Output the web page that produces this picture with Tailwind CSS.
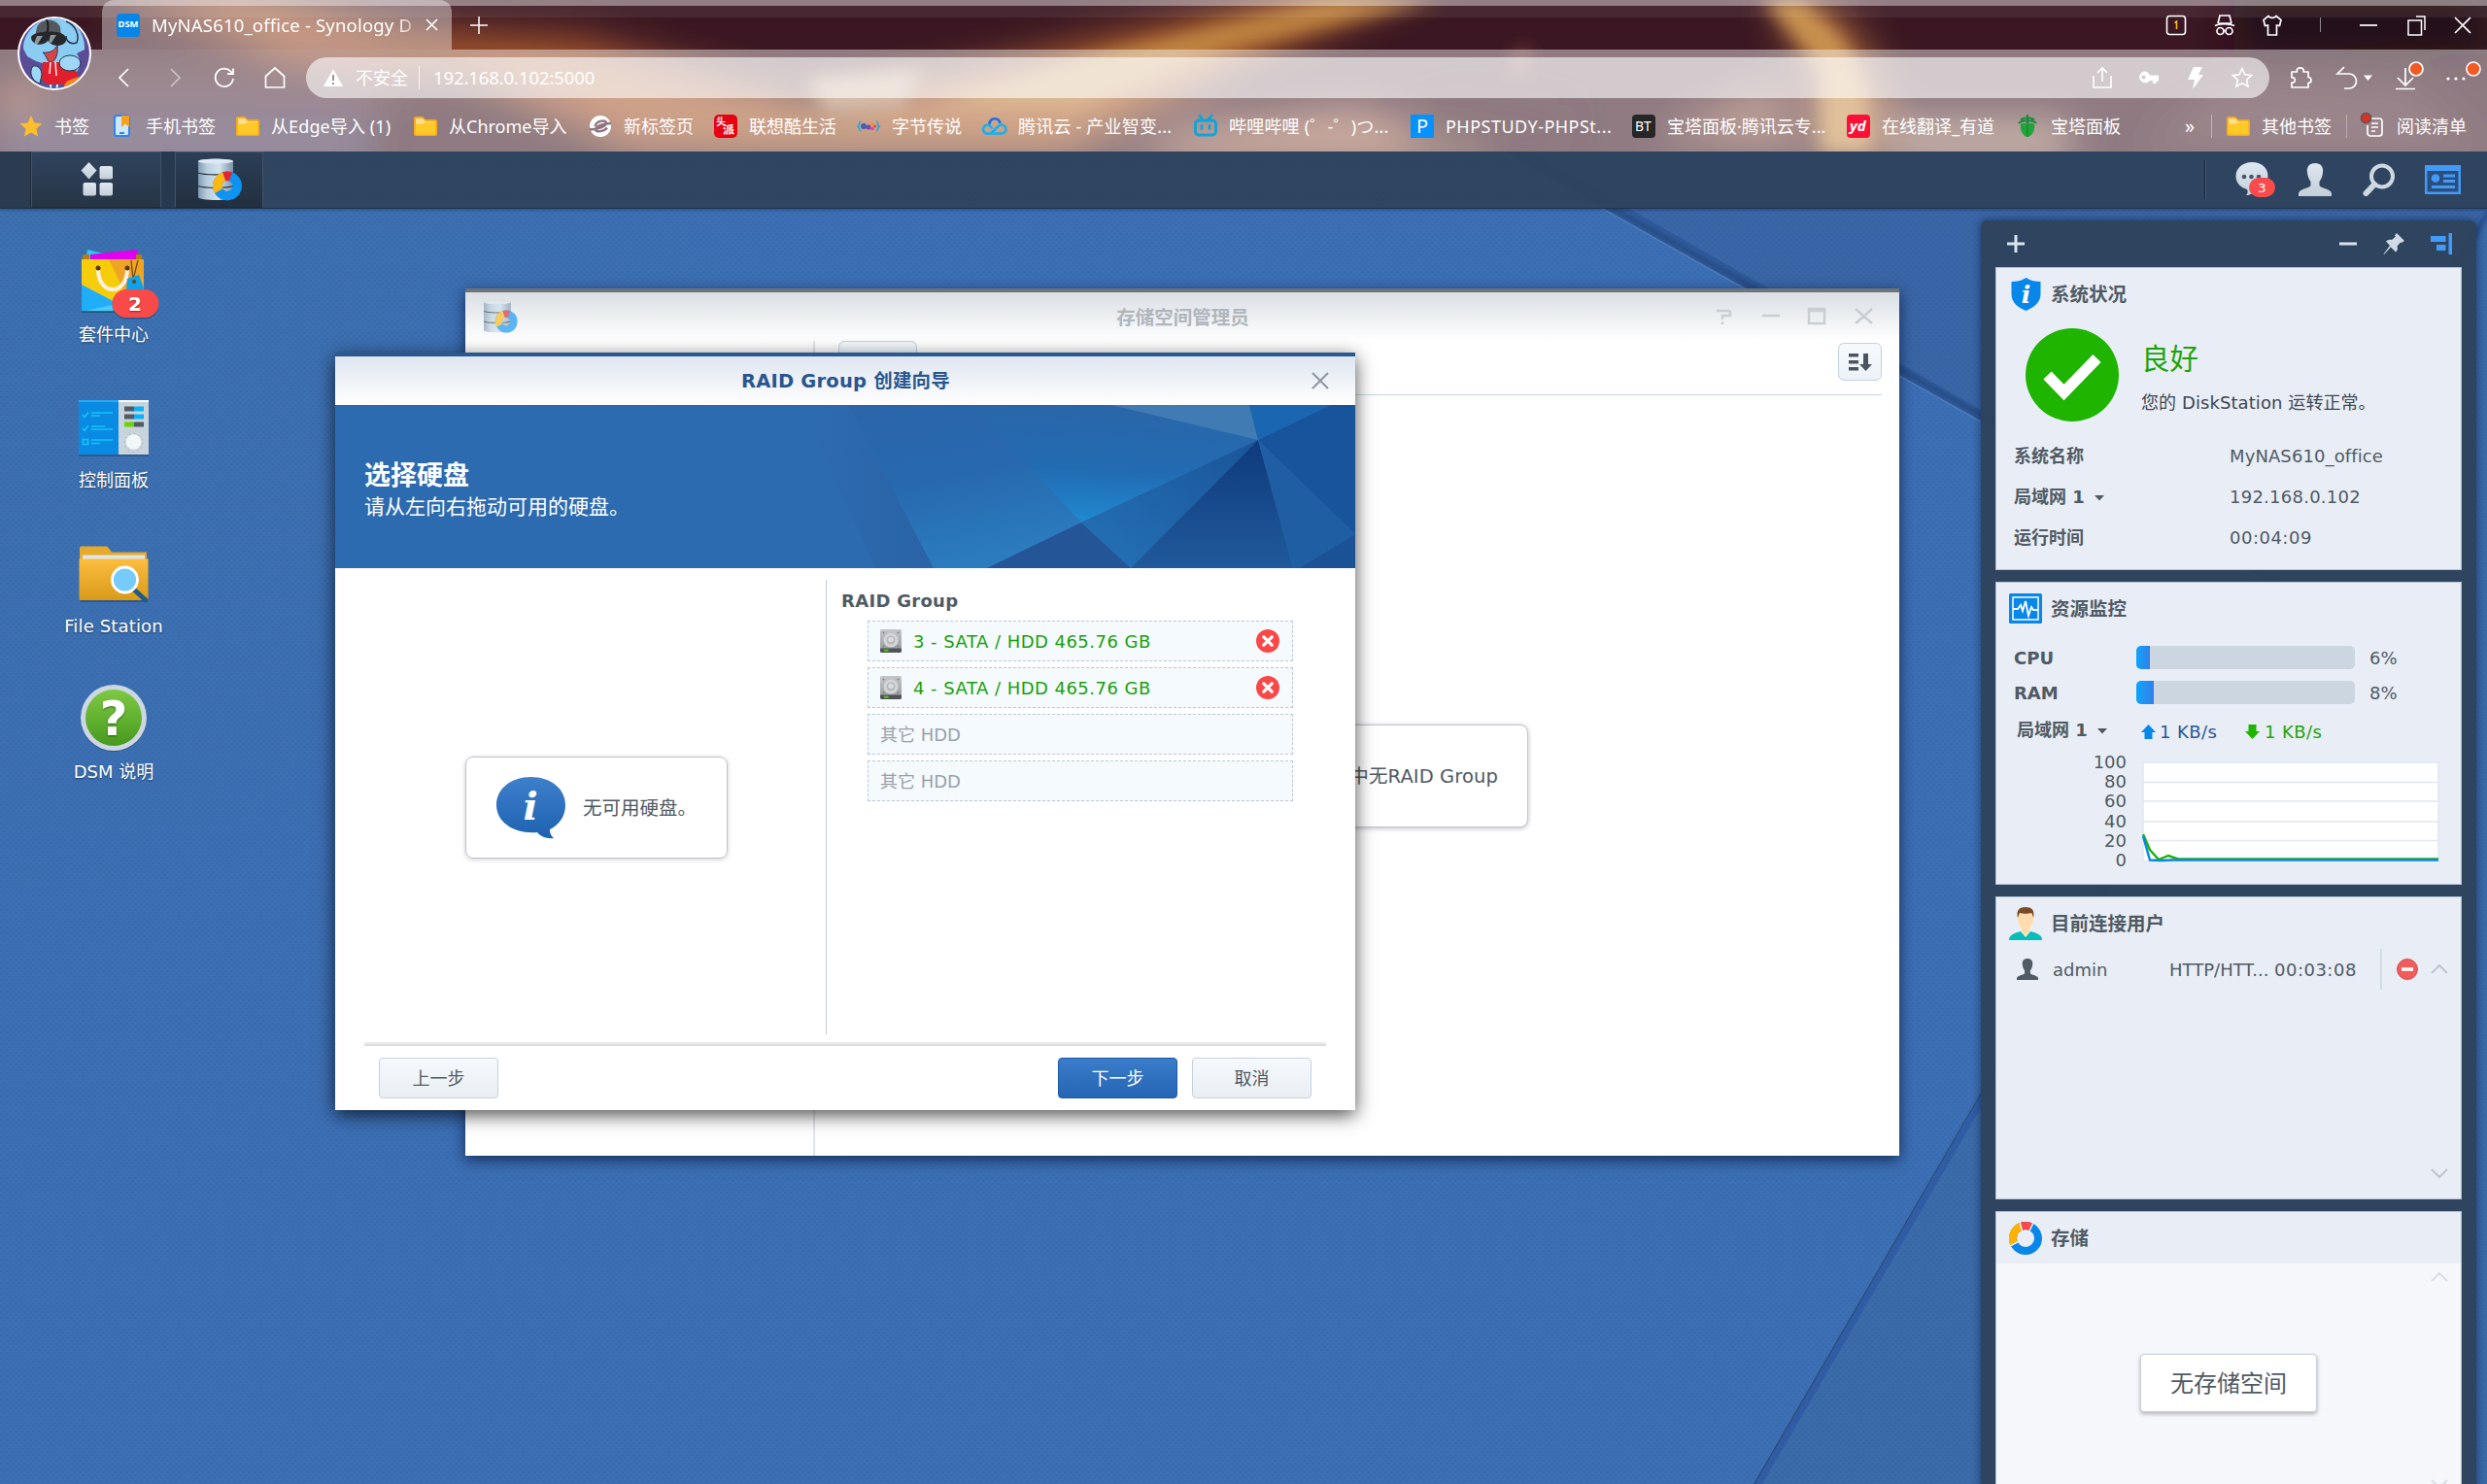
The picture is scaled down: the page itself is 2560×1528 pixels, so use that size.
<!DOCTYPE html>
<html lang="zh-CN">
<head>
<meta charset="utf-8">
<title>MyNAS610_office - Synology DiskStation</title>
<script src="https://cdn.jsdelivr.net/npm/@tailwindcss/browser@4"></script>
</head>
<body class="w-[2560px] h-[1528px] overflow-hidden flex flex-col font-['DejaVu_Sans','Noto_Sans_CJK_SC',sans-serif] text-[18px] text-[#505a64]">

<!-- shared symbols -->
<svg class="absolute" width="0" height="0">
  <defs>
    <linearGradient id="cyl" x1="0" x2="1"><stop offset="0" stop-color="#7f9ab0"/><stop offset=".25" stop-color="#b9cedd"/><stop offset=".6" stop-color="#d3e3ee"/><stop offset="1" stop-color="#7993a8"/></linearGradient>
    <linearGradient id="fold" x1="0" x2="0" y1="0" y2="1"><stop offset="0" stop-color="#fdbd3f"/><stop offset="1" stop-color="#d89a19"/></linearGradient>
    <linearGradient id="grn" x1="0" x2="0" y1="0" y2="1"><stop offset="0" stop-color="#7ec943"/><stop offset="1" stop-color="#479a1e"/></linearGradient>
    <linearGradient id="bub" x1="0" x2="0" y1="0" y2="1"><stop offset="0" stop-color="#3e80cb"/><stop offset="1" stop-color="#1d61b0"/></linearGradient>
    <linearGradient id="pale" x1="0" x2="0" y1="0" y2="1"><stop offset="0" stop-color="#dfe8f1"/><stop offset="1" stop-color="#c3ced9"/></linearGradient>
    <linearGradient id="hdd" x1="0" x2="0" y1="0" y2="1"><stop offset="0" stop-color="#c4c6c9"/><stop offset="1" stop-color="#95989c"/></linearGradient>
  </defs>
  <symbol id="storage" viewBox="0 0 46 44">
    <path d="M1 3c0-3 36-3 36 0v37c0 4-36 4-36 0z" fill="url(#cyl)"/>
    <ellipse cx="19" cy="3" rx="18" ry="2.4" fill="#dce9f2"/>
    <path d="M1 15c6 2.4 30 2.4 36 0M1 28.500c6 2.400 30 2.400 36 0" fill="none" stroke="#26323c" stroke-width="1.300"/>
    <g fill="none" stroke-width="9.500">
      <circle cx="31" cy="28.500" r="10.200" stroke="#0d93f2"/>
      <path d="M22.200 33.600A10.200 10.200 0 0 1 27.800 18.800" stroke="#fcb813"/>
      <path d="M27.800 18.800A10.200 10.200 0 0 1 34.400 18.900" stroke="#e8212e"/>
    </g>
  </symbol>
  <symbol id="folder" viewBox="0 0 24 24"><path d="M0 4a2 2 0 0 1 2-2h7l3 3h10a2 2 0 0 1 2 2v13a2 2 0 0 1-2 2H2a2 2 0 0 1-2-2z" fill="#fba61c"/><path d="M2 4h7l3 3h10v3H2z" fill="#ffe08a"/><path d="M1.500 9.500H9l3-1.500h10.500v12.500h-21z" fill="#ffc928"/></symbol>
  <symbol id="person" viewBox="0 0 34 34"><path d="M17 0c6 0 9 4 8 10-.5 4-2 7-3.500 9v4c1 3 11 3 12.500 8v3H0v-3c1.500-5 11.500-5 12.500-8v-4C11 17 9.500 14 9 10 8 4 11 0 17 0z"/></symbol>
  <symbol id="drive" viewBox="0 0 22 24"><rect width="22" height="24" rx="1.500" fill="url(#hdd)"/><circle cx="11" cy="11" r="7.500" fill="#d3d5d7"/><circle cx="11" cy="11" r="4.500" fill="#b4b7ba"/><circle cx="11" cy="10.500" r="2.800" fill="#d9dbdd"/><g fill="#7d8083"><circle cx="3.500" cy="3.500" r=".9"/><circle cx="18.500" cy="3.500" r=".9"/><circle cx="3.500" cy="17.500" r=".9"/><circle cx="18.500" cy="17.500" r=".9"/></g><path d="M0 19.500h22V22a2 2 0 0 1-2 2H2a2 2 0 0 1-2-2z" fill="#4f5459"/><rect x="4" y="20.800" width="4.500" height="1.800" fill="#5ccb1c"/></symbol>
  <symbol id="remove" viewBox="0 0 24 24"><circle cx="12" cy="12" r="12" fill="#fb4747"/><path d="M7.800 7.800l8.400 8.400m0-8.400l-8.400 8.400" stroke="#fff" stroke-width="3.300" stroke-linecap="round"/></symbol>
  <symbol id="up" viewBox="0 0 18 12"><path d="M1 10l8-8 8 8" fill="none" stroke="currentColor" stroke-width="2"/></symbol>
  <symbol id="down" viewBox="0 0 18 12"><path d="M1 2l8 8 8-8" fill="none" stroke="currentColor" stroke-width="2"/></symbol>
</svg>

<!-- browser chrome -->
<header class="relative h-[156px] shrink-0 overflow-hidden bg-[#3a1723] text-white font-['Noto_Sans','Noto_Sans_CJK_SC',sans-serif]">
  <svg class="absolute inset-0" width="2560" height="156" viewBox="0 0 2560 156">
    <defs><filter id="b1" x="-50%" y="-50%" width="200%" height="200%"><feGaussianBlur stdDeviation="20"/></filter><filter id="b2" x="-50%" y="-50%" width="200%" height="200%"><feGaussianBlur stdDeviation="9"/></filter></defs>
    <g filter="url(#b1)">
      <path d="M100 -10L250 -10L420 30L600 40L820 100L900 156L640 150L480 80L300 60z" fill="#a8582f"/>
      <path d="M0 90L60 80L0 130z" fill="#b46a40"/>
      <path d="M0 115h380v60H0z" fill="#4a3858"/>
      <path d="M60 60h300l60 50H60z" fill="#54303c"/>
      <path d="M780 120L1100 50L1360 -10L1480 -20L1290 60L1100 156H620z" fill="#b2632f"/>
      <path d="M1220 130L1400 110L1530 166H1160z" fill="#a87058"/>
      <path d="M1480 100L1620 110L1600 156H1450z" fill="#3b1824"/>
      <path d="M1820 0h60l50 60l30 96h-90l-10-90z" fill="#a06038"/>
      <path d="M1700 140L1830 80L1850 156z" fill="#8a5646"/>
      <path d="M2290 80L2480 90L2560 156H2200z" fill="#4f2a36"/>
      <path d="M1950 125h180v40H1950z" fill="#a88270"/>
      <path d="M2300 0h260v56h-260z" fill="#200b12"/>
    </g>
    <g filter="url(#b2)">
      <path d="M1120 60L1370 0H1480L1260 50L1110 110H960z" fill="#bf8643"/>
      <path d="M1815 0h40l42 40l22 50l8 66h-52V70z" fill="#c9924f"/>
      <path d="M830 80l120-8l-20 38l-80 6z" fill="#b98e6c"/>
      <path d="M1560 50h16l-4 24h-20z" fill="#7a4038"/>
    </g>
    <rect width="2560" height="6" fill="#fff" fill-opacity=".45"/>
    <rect y="6" width="2560" height="12" fill="#fff" fill-opacity=".07"/>
  </svg>

  <div class="relative h-[51px] flex items-stretch pl-[105px]">
    <div class="w-[360px] rounded-t-xl bg-white/40 flex items-center pl-[15px] pr-[13px]">
      <div class="size-6 rounded bg-[#0686e8] text-[9.500px] font-bold flex items-center justify-center">DSM</div>
      <div class="ml-[12px] w-[275px] whitespace-nowrap text-[18.500px] tracking-[0.180px] [mask-image:linear-gradient(90deg,#000_92%,transparent_102%)]">MyNAS610_office - Synology D</div>
      <svg class="ml-auto" width="15" height="15" viewBox="0 0 15 15" stroke="#fff" stroke-width="1.600"><path d="M2 2l11 11M13 2L2 13"/></svg>
    </div>
    <svg class="ml-[19px] self-center" width="18" height="18" stroke="#fff" stroke-width="1.500"><path d="M9 0v18M0 9h18"/></svg>
    <div class="ml-auto w-[332px] flex items-center justify-between pr-[15px]">
      <svg width="24" height="24" viewBox="0 0 24 24" fill="none" stroke="#fff" stroke-width="1.600"><rect x="2.500" y="2.500" width="19" height="19" rx="3"/><path d="M10.500 9.500l2-1.500v8" stroke="#f8b818"/></svg>
      <svg width="24" height="24" viewBox="0 0 24 24" fill="none" stroke="#fff" stroke-width="1.700"><path d="M5 10l2-8h10l2 8M2 12.500c5-2.500 15-2.500 20 0M5 10h14"/><circle cx="7.500" cy="18" r="3.500"/><circle cx="16.500" cy="18" r="3.500"/><path d="M11 17.500h2"/></svg>
      <svg width="24" height="24" viewBox="0 0 24 24" fill="none" stroke="#fff" stroke-width="1.700"><path d="M8 2.500c2 2.500 6 2.500 8 0l5 4-1.500 6-3-.5V22h-9V12l-3 .5L3 6.500z"/></svg>
      <span class="w-px h-[15px] bg-white/50 mx-[11px]"></span>
      <svg width="24" height="24" stroke="#fff" stroke-width="1.700"><path d="M3 12h18"/></svg>
      <svg width="24" height="24" viewBox="0 0 24 24" fill="none" stroke="#fff" stroke-width="1.500"><rect x="4" y="7" width="13.500" height="15"/><path d="M12 3h9v14"/></svg>
      <svg width="20" height="24" viewBox="0 0 20 24" stroke="#fff" stroke-width="1.600"><path d="M2 4l16 16M18 4L2 20"/></svg>
    </div>
  </div>

  <div class="relative h-[105px] bg-white/43">
    <div class="h-[60px] pt-2 flex items-start">
      <div class="w-[315px] h-[42px] flex items-center pl-[116px] gap-[27.500px] text-white">
        <svg width="24" height="24" viewBox="0 0 24 24" fill="none" stroke="#fff" stroke-width="1.700"><path d="M16 3L7 12l9 9"/></svg>
        <svg width="24" height="24" viewBox="0 0 24 24" fill="none" stroke="#fff" stroke-opacity=".5" stroke-width="1.700"><path d="M8 3l9 9-9 9"/></svg>
        <svg width="24" height="24" viewBox="0 0 24 24" fill="none" stroke="#fff" stroke-width="1.800"><path d="M21 13a9.200 9.200 0 1 1-2.500-7.500L21 8M21 2.500V8h-6"/></svg>
        <svg width="24" height="24" viewBox="0 0 24 24" fill="none" stroke="#fff" stroke-width="1.700"><path d="M2.500 10.500L12 2l9.500 8.500V22h-19z"/></svg>
      </div>
      <div class="w-[2021px] h-[42px] rounded-full bg-white/60 flex items-center pl-[18px] pr-4">
        <svg width="20" height="18" viewBox="0 0 20 18"><path d="M10 0l10 18H0z" fill="#fff"/><path d="M10 6v6M10 14v2" stroke="#a58f92" stroke-width="2"/></svg>
        <span class="ml-[13px] w-[54px]">不安全</span>
        <span class="ml-[11px] w-px h-6 bg-white/80"></span>
        <span class="ml-[14px] text-[18.500px] tracking-[-0.100px]">192.168.0.102:5000</span>
        <div class="ml-auto flex gap-6 text-white">
          <svg width="24" height="24" viewBox="0 0 24 24" fill="none" stroke="#fff" stroke-width="1.600"><path d="M3 10v12h18V10M12 16V2M7 7l5-5 5 5"/></svg>
          <svg width="24" height="24" viewBox="0 0 24 24" fill="#fff"><path fill-rule="evenodd" d="M7 5.500a6 6 0 0 1 5.800 4H22v6h-2.500V18H16v-3h-3a6 6 0 1 1-6-9.500zM6.500 9.500a2 2 0 1 0 0 4 2 2 0 0 0 0-4z"/></svg>
          <svg width="24" height="24" viewBox="0 0 24 24" fill="#fff"><path d="M10 1h9l-4 8h5L9 24l2-10H4z"/></svg>
          <svg width="24" height="24" viewBox="0 0 24 24" fill="none" stroke="#fff" stroke-width="1.600"><path d="M12 2.500l2.900 6.300 6.700.8-5 4.600 1.400 6.800-6-3.400L6 21l1.400-6.800-5-4.600 6.700-.8z"/></svg>
        </div>
      </div>
      <div class="h-[42px] flex items-center pl-5">
        <svg width="24" height="24" viewBox="0 0 24 24" fill="none" stroke="#fff" stroke-width="1.700"><path d="M3 6h5.500c-2-5.500 8.500-5.500 6.500 0h5v5.500c4 0 4 6 0 6V22H3v-5c4.500 1 4.500-6 0-5z" stroke-linejoin="round"/></svg>
        <svg class="ml-6" width="42" height="24" viewBox="0 0 42 24" fill="none" stroke="#fff" stroke-width="1.700"><path d="M9 1L2 8h12a7 7 0 0 1 0 15H9"/><path d="M29 9.500h9L33.500 15z" fill="#fff" stroke="none"/></svg>
        <svg class="ml-[18px]" width="36" height="42" viewBox="0 0 36 42" fill="none" stroke="#fff" stroke-width="1.700"><path d="M12 11v18M4 21l8 8 8-8M2 32.500h20"/><circle cx="23" cy="12" r="7" fill="#f15a24"/></svg>
        <svg class="ml-[15px]" width="44" height="42" viewBox="0 0 44 42"><g fill="#fff"><circle cx="5" cy="22" r="1.600"/><circle cx="13" cy="22" r="1.600"/><circle cx="21" cy="22" r="1.600"/></g><circle cx="31" cy="12" r="7" fill="#f15a24" stroke="#fff" stroke-width="1.600"/></svg>
      </div>
    </div>

    <!-- bookmarks -->
    <nav class="h-[38px] pl-5 flex items-center whitespace-nowrap [&_svg]:size-6 [&_svg]:shrink-0 [&_svg]:overflow-visible">
      <a class="w-[94px] flex items-center gap-3"><svg viewBox="0 0 24 24"><path d="M12 1l3.400 7.400 8 .9-6 5.300 1.700 8L12 18.500 4.900 22.600l1.700-8-6-5.300 8-.9z" fill="#ffbf2b"/></svg>书签</a>
      <a class="w-[129px] flex items-center gap-3"><svg viewBox="0 0 24 24"><rect x="4" y="1" width="15" height="21" rx="2.500" fill="#cfe6ff" stroke="#2f86ea" stroke-width="2"/><path d="M11 1h8v12l-4-3.500L11 13z" fill="#f6a21b"/><path d="M9 19h5" stroke="#2f86ea" stroke-width="2"/></svg>手机书签</a>
      <a class="w-[183px] flex items-center gap-3"><svg><use href="#folder"/></svg><span class="tracking-[0.100px]">从Edge导入 (1)</span></a>
      <a class="w-[180px] flex items-center gap-3"><svg><use href="#folder"/></svg><span>从Chrome导入</span></a>
      <a class="w-[129px] flex items-center gap-3"><svg viewBox="0 0 24 24"><circle cx="12" cy="12" r="11" fill="#fff"/><path d="M1 15c8 1 17-3 17-6.500C18 5 8 6 6.500 12M23 9c-8 0-16 3-16 6.500 0 3 9 2 12-2" fill="none" stroke="#8f7580" stroke-width="2.400"/></svg>新标签页</a>
      <a class="w-[147px] flex items-center gap-3"><svg viewBox="0 0 24 24"><rect width="24" height="24" rx="5" fill="#e60012"/><text x="2" y="11" font-size="10" fill="#fff" font-weight="700">头</text><text x="9" y="20" font-size="12" fill="#fff" font-weight="700">派</text></svg>联想酷生活</a>
      <a class="w-[130px] flex items-center gap-3"><svg viewBox="0 0 24 24"><g fill="none" stroke="#22a5e8" stroke-width="1.500"><path d="M4 7c-2 0-1 4-3 5 2 1 1 5 3 5M20 7c2 0 1 4 3 5-2 1-1 5-3 5"/></g><circle cx="7" cy="12" r="3" fill="#3862b8"/><circle cx="12" cy="13" r="2.500" fill="#7a46ae"/><circle cx="16" cy="10" r="1.700" fill="#f0932b"/><circle cx="18.500" cy="12" r="1.500" fill="#e8453c"/><circle cx="16" cy="14.500" r="1.500" fill="#e82bbd"/></svg>字节传说</a>
      <a class="w-[217px] flex items-center gap-3"><svg viewBox="0 0 24 24" fill="none" stroke-width="2.600"><path d="M6.500 10.500a5.500 5.500 0 0 1 11-1.500" stroke="#1c6fe8"/><path d="M9 14.500A4.500 4.500 0 1 0 6 19.500h13a4.500 4.500 0 0 0 0-9c-2 0-3 1-4 2L8 19.500" stroke="#14b1f0"/></svg><span class="tracking-[0.200px]">腾讯云 - 产业智变...</span></a>
      <a class="w-[223px] flex items-center gap-3"><svg viewBox="0 0 24 24" fill="none" stroke="#0ba5de" stroke-width="2.800"><rect x="1.500" y="6" width="21" height="15" rx="3.500"/><path d="M6 1l3 4M18 1l-3 4M8 11.500v3M16 11.500v3" stroke-linecap="round"/></svg><span class="tracking-[0.200px]">哔哩哔哩 (゜-゜)つ...</span></a>
      <a class="w-[228px] flex items-center gap-3"><svg viewBox="0 0 24 24"><rect width="24" height="24" fill="#0492ff"/><text x="6" y="19" font-size="20" fill="#fff">P</text></svg><span class="tracking-[0.480px]">PHPSTUDY-PHPSt...</span></a>
      <a class="w-[221px] flex items-center gap-3"><svg viewBox="0 0 24 24"><rect width="24" height="24" rx="4" fill="#262626"/><text x="3" y="17" font-size="14" fill="#fff">BT</text></svg><span>宝塔面板·腾讯云专...</span></a>
      <a class="w-[174px] flex items-center gap-3"><svg viewBox="0 0 24 24"><rect width="24" height="24" rx="4" fill="#fc1038"/><text x="3" y="17" font-size="15" font-style="italic" font-weight="700" fill="#fff">yd</text></svg>在线翻译_有道</a>
      <a class="w-[174px] flex items-center gap-3"><svg viewBox="0 0 24 24"><path d="M5 10c2-2 12-2 14 0 1 6-2 12-7 13C7 22 4 16 5 10z" fill="#20a53a"/><path d="M3 9c4-4 14-4 18 0M5 5.500c3-3 11-3 14 0M12 0v9" fill="none" stroke="#178a3a" stroke-width="2"/><path d="M12 10v13" stroke="#0f7a2c"/></svg>宝塔面板</a>
      <span class="w-[27px] text-[20px] leading-none">»</span>
      <span class="w-px h-6 bg-white/40"></span>
      <a class="ml-[15px] w-[123px] flex items-center gap-3"><svg><use href="#folder"/></svg>其他书签</a>
      <span class="w-px h-6 bg-white/30"></span>
      <a class="ml-[15px] flex items-center gap-3"><svg viewBox="0 0 24 24" fill="none" stroke="#fff" stroke-width="1.700"><path d="M9 4h9a3 3 0 0 1 3 3v12a3 3 0 0 1-3 3H9a3 3 0 0 1-3-3v-8M10 9h7M10 13h7M10 17h4"/><circle cx="4.500" cy="3.500" r="5" fill="#da3324" stroke="#6c5254"/></svg><span>阅读清单</span></a>
    </nav>
  </div>

  <!-- profile avatar -->
  <svg class="absolute left-[16px] top-[16px]" width="80" height="80" viewBox="0 0 80 80">
    <defs><clipPath id="av"><circle cx="40" cy="39" r="36"/></clipPath></defs>
    <circle cx="40" cy="39" r="38" fill="#fff"/>
    <g clip-path="url(#av)">
      <rect width="80" height="80" fill="#5a4c96"/>
      <path d="M8 34C8 14 28 0 46 3c18 2 26 18 25 32l-8 4c4 6 4 14 0 19l-14 4-12-10-16-5-9-5z" fill="#8bcdf2"/>
      <path d="M52 6c10 4 14 14 11 22-6 2-11-1-11-7" fill="none" stroke="#243249" stroke-width="1.500"/>
      <path d="M22 12c4-9 20-10 24 0l1 10H20z" fill="#55595d"/>
      <path d="M32 4c2 5 2 10 0 16" fill="none" stroke="#1a1c1f" stroke-width="2"/>
      <path d="M16 22c2-6 28-8 34-2 5 5 1 11-7 11-5 0-8-3-10-5-4 6-17 5-17-4z" fill="#26282b"/>
      <path d="M22 21h6l-5 8h-4zM36 20h6l-5 8h-3z" fill="#8e959b"/>
      <path d="M28 38c7 1 13-2 15-8 1 9-1 18-8 18-3-2-3-7-7-10z" fill="#d84347" stroke="#2b3850" stroke-width="1"/>
      <path d="M28 48h26c8 6 11 12 9 18l-10 5H32l-5-6z" fill="#e11f2c"/>
      <path d="M41 48l1 14M36 48l-1 12" stroke="#fff" stroke-width="1.400"/>
      <path d="M18 52c5-1 9 3 9 9l-2 9c-8-2-12-12-7-18z" fill="#9fd8f6" stroke="#243249"/>
      <ellipse cx="56" cy="49" rx="11" ry="8" fill="#9fd8f6" stroke="#243249"/>
      <path d="M50 75c0-12 14-8 24-17-2 14-9 23-24 20z" fill="#f08a1d"/><path d="M56 72c6-3 10-6 13-9-1 8-6 11-12 12z" fill="#ffd23c"/>
      <path d="M30 71h18l2 9H28z" fill="#3563a8"/><path d="M36 71l1 9M43 71l-1 9" stroke="#e6f2fb" stroke-width="2"/>
    </g>
  </svg>
</header>

<!-- desktop -->
<main class="relative flex-1 flex flex-col overflow-hidden bg-[#3b6cb0]">
  <svg class="absolute inset-0" width="2560" height="1372" viewBox="0 156 2560 1372">
    <defs>
      <pattern id="tex" width="6" height="6" patternUnits="userSpaceOnUse"><path d="M0 1h3M3 4h3" stroke="#1d4c90" stroke-opacity=".16" stroke-width="1.500"/></pattern>
      <radialGradient id="tl" cx="0" cy="0" r="1"><stop offset="0" stop-color="#3c73a8"/><stop offset="1" stop-color="#3c73a8" stop-opacity="0"/></radialGradient>
      <filter id="sf"><feGaussianBlur stdDeviation="2"/></filter>
    </defs>
    <rect y="156" width="2560" height="1372" fill="#3c6fb4"/>
    <rect y="156" width="900" height="900" fill="url(#tl)" opacity=".5"/>
    <path d="M1560 156L2345 597L2590 156z" fill="#3a66a6"/>
    <path d="M2343 600L1804 1528H2560V220z" fill="#3b6ba8"/>
    <path d="M1545 156L2330 598L2345 598L1575 156z" fill="#305b9c"/>
    <path d="M1556 156L2341 597" stroke="#27487c" stroke-width="4" filter="url(#sf)"/>
    <path d="M1545 156L2330 598" stroke="#4f7fbd" stroke-width="1.500"/>
    <path d="M2343 600L1804 1528h10L2353 600z" fill="#315da4"/>
    <path d="M2342 602L1805 1528" stroke="#2b4d80" stroke-width="2.500"/>
    <path d="M2343 600L1804 1528" stroke="#4577b5" stroke-width="1.200"/>
    <path d="M2350 590L2562 216" stroke="#2a4f88" stroke-width="6" filter="url(#sf)"/>
    <rect y="156" width="2560" height="1372" fill="url(#tex)"/>
  </svg>

  <!-- taskbar -->
  <div class="relative h-[59px] shrink-0 flex items-stretch bg-[#2e425c]/95 border-b border-[#20344f] shadow-[0_1px_3px_rgba(0,0,0,.3)]">
    <div class="w-[32px] bg-[#2b3b50] border-r border-[#1d2a3b]"></div>
    <div class="w-[134px] bg-linear-to-b from-[#30445e] to-[#263445] border border-[#405269] border-b-[#1d2a3b] flex items-center justify-center">
      <svg width="36" height="36" viewBox="0 0 36 36" fill="url(#pale)"><path d="M10.500 0l8 8.500-8 9-8-9z"/><rect x="21.500" y="4" width="13.500" height="13.500" rx="2"/><rect x="4.500" y="21" width="13.500" height="13.500" rx="2"/><rect x="21.500" y="21" width="13.500" height="13.500" rx="2"/></svg>
    </div>
    <div class="w-[14px] bg-[#27394f]"></div>
    <div class="w-[91px] bg-linear-to-b from-[#2c3f57] to-[#222f3f] border border-[#41536a] border-b-[#1d2a3b] flex items-center justify-center">
      <svg width="46" height="44"><use href="#storage"/></svg>
    </div>
    <div class="ml-auto w-[291px] flex items-center pl-8">
      <div class="-ml-8 mr-[31px] w-px h-10 bg-[#17273b] shadow-[1px_0_0_#465a73]"></div>
      <svg width="42" height="38" viewBox="0 0 42 38"><path d="M17 1c10 0 16.500 6 16.500 14S27 29 19 30c0 3-4 5-8 5 2-2 2-4 1-6C5 27 .5 22 .5 15.500.5 7.500 7 1 17 1z" fill="url(#pale)"/><g fill="#46566b"><circle cx="9" cy="16" r="2.300"/><circle cx="16.500" cy="16" r="2.300"/><circle cx="24" cy="16" r="2.300"/></g><rect x="14" y="17" width="27" height="20" rx="10" fill="#f94b4b"/><text x="27.500" y="32" text-anchor="middle" font-size="13" fill="#fff">3</text></svg>
      <svg class="ml-[23px]" width="34" height="34" fill="url(#pale)"><use href="#person"/></svg>
      <svg class="ml-[32px]" width="34" height="34" viewBox="0 0 34 34" fill="none" stroke="#ced8e2"><circle cx="20" cy="13.500" r="11" stroke-width="4"/><path d="M12 22L3.500 31" stroke-width="6" stroke-linecap="round"/></svg>
      <svg class="ml-[30px]" width="37" height="30" viewBox="0 0 37 30"><rect x="1.250" y="1.250" width="34.500" height="27.500" fill="#2b4e7c" stroke="#429bf8" stroke-width="2.500"/><path d="M0 0h37v6H0z" fill="#429bf8"/><circle cx="11" cy="13.500" r="4.300" fill="#429bf8"/><path d="M19 11h12M19 16.500h12M7 22.500h24" stroke="#429bf8" stroke-width="3"/></svg>
    </div>
  </div>

  <!-- desktop icons -->
  <div class="relative mt-[39px] ml-[42px] w-[150px] flex flex-col text-white text-center [text-shadow:0_1px_2px_rgba(0,0,0,.45)]">
    <div class="h-[150px] flex flex-col items-center">
      <svg width="84" height="76" viewBox="75 254 84 76" class="overflow-visible">
        <path d="M90 257l24 6-6 8H88z" fill="#2ccaf0"/><path d="M93 262l49-5v12H93z" fill="#e100ef"/><path d="M86 262h6v6h-8zM140 262h6v6h-6z" fill="#b87c14"/>
        <path d="M84 267h64v54H84z" fill="#f6cd0b"/><path d="M112 267h36v54h-10z" fill="#eea523"/>
        <path d="M84 293l46 24v4H84z" fill="#20aefb"/><path d="M84 321l40-9 10 9z" fill="#46cbfb"/><path d="M84 320h64v2H84z" fill="#204468" opacity=".7"/>
        <path d="M101 277c0 28 30 28 30 0" fill="none" stroke="#fdf1e6" stroke-width="4"/><circle cx="101" cy="276" r="2.500" fill="#5b3908"/><circle cx="131" cy="276" r="2.500" fill="#5b3908"/>
        <path d="M135 268l2 20 5-20" fill="none" stroke="#6b4310" stroke-width="1.200"/><path d="M131 287l12-4 5 14-8 12-10-8z" fill="#0ea3e8"/><circle cx="138" cy="290" r="2" fill="#6b4310"/>
        <rect x="115.500" y="299.500" width="48" height="29" rx="14.500" fill="#1c3f6e" opacity=".5"/><rect x="115.500" y="298" width="48" height="29" rx="14.500" fill="#f94a4a"/><text x="139" y="320" text-anchor="middle" font-size="20" font-weight="700" fill="#fff">2</text>
      </svg>
      <div class="mt-[1px]">套件中心</div>
    </div>
    <div class="h-[150px] flex flex-col items-center pt-[8px]">
      <svg width="72" height="58" viewBox="81 412 72 58">
        <path d="M81 414h72v56H81z" fill="#1e3b63" opacity=".4"/><path d="M81 412h41v56H81z" fill="#0a8be3"/><path d="M81 412h41v2H81z" fill="#28aaf5"/><path d="M122 412h31v56h-31z" fill="#c9d3dc"/><path d="M122 412h31v2h-31z" fill="#fff"/>
        <path d="M94 425h22M94 428h9M94 439h14M94 442h22M94 453h22M94 456.500h9M85 427l2 2.500 4-5M85 441l2 2.500 4-5M85.500 452.500h5v5h-5z" stroke="#17c2f7" stroke-width="1.700" fill="none"/>
        <g stroke-width="5"><path d="M128 421h10" stroke="#505b66"/><path d="M138 421h10" stroke="#0ab2f7"/><path d="M128 429h10" stroke="#505b66"/><path d="M138 429h10" stroke="#0ab2f7"/><path d="M128 437h10" stroke="#6bd403"/><path d="M138 437h10" stroke="#505b66"/></g>
        <circle cx="137.500" cy="456" r="9.500" fill="none" stroke="#8d989f" stroke-dasharray="1 4"/><circle cx="137.500" cy="455" r="7.800" fill="#f2f7fa"/>
      </svg>
      <div class="mt-[11px]">控制面板</div>
    </div>
    <div class="h-[150px] flex flex-col items-center pt-[8px]">
      <svg width="72" height="60" viewBox="0 0 72 60">
        <path d="M1 2q0-1.500 1.500-1.500H28q2 0 3 2l3 4h36v20H1z" fill="#e5a92b"/><path d="M4 9.500h64v8H4z" fill="#dfe4e6"/><path d="M1 15h70v41q0 2-2 2H3q-2 0-2-2z" fill="#28415f" opacity=".5"/><path d="M.5 13.500h71V55q0 1-1 1h-69q-1 0-1-1z" fill="url(#fold)"/>
        <path d="M58 46l11 10" stroke="#1e5c86" stroke-width="5" stroke-linecap="round"/><circle cx="47.500" cy="35" r="13" fill="#76cbf9" stroke="#fff" stroke-width="2.800"/>
      </svg>
      <div class="mt-[9px] tracking-[0.150px]">File Station</div>
    </div>
    <div class="h-[150px] flex flex-col items-center">
      <svg width="70" height="70" viewBox="0 0 70 70"><circle cx="35" cy="36" r="34" fill="#1e3b63" opacity=".5"/><circle cx="35" cy="35" r="34" fill="#cdd7e2"/><circle cx="35" cy="35" r="29" fill="url(#grn)"/><text x="35" y="53" text-anchor="middle" font-size="50" font-weight="700" fill="#fff">?</text></svg>
      <div class="mt-[7px]">DSM 说明</div>
    </div>
  </div>

  <!-- storage manager window -->
  <section class="absolute left-[479px] top-[141px] w-[1476px] h-[893px] bg-white border-t-4 border-[#6f747a] shadow-[0_4px_14px_rgba(0,10,40,.65)] flex flex-col">
    <div class="h-[50px] shrink-0 bg-linear-to-b from-[#dadfe4] to-white flex items-center pl-[18px] pr-[26px]">
      <svg class="opacity-65" width="36" height="34" viewBox="0 0 46 44"><use href="#storage"/></svg>
      <div class="flex-1 pl-[137px] pt-[3px] text-center font-bold text-[19.500px] text-[#b0b6bd]">存储空间管理员</div>
      <svg width="164" height="20" viewBox="0 0 164 20" fill="none" stroke="#c9ced3" stroke-width="2.500"><path d="M2 4h12q2 0 2 2v3H8v4M8 15.500v2.500M49 9h18M97 2h16v15H97zM97 4h16M145 2l17 15M162 2l-17 15"/></svg>
    </div>
    <div class="flex-1 flex">
      <div class="w-[360px] border-r-2 border-[#e2e5e8]"></div>
      <div class="flex-1 flex flex-col pl-6 pr-[18px]">
        <div class="h-[56px] flex items-start justify-between border-b border-[#c9d6e4]">
          <div class="w-[81px] h-10 border border-[#c4d0df] rounded-md bg-[#f3f8fd]"></div>
          <div class="mt-[2px] w-[45px] h-[39px] border border-[#c4d2e1] rounded-md bg-linear-to-b from-[#f6fafe] to-[#ecf2f7] flex items-center justify-center">
            <svg width="26" height="20" viewBox="0 0 26 20" fill="#4a5560"><path d="M1 1h10v3.500H1zM1 8h10v3.500H1zM1 15h10v3.500H1zM16 1h5v11h4l-6.500 7L12 12h4z"/></svg>
          </div>
        </div>
        <div class="mt-[339px] ml-[359px] w-[351px] h-[106px] rounded-lg border border-[#bcc5d1] bg-white shadow-[0_1px_5px_rgba(0,0,0,.25)] flex items-center justify-end pr-[30px] pt-[2px] text-[19.500px] tracking-[0.100px] whitespace-nowrap">系统中无RAID Group</div>
      </div>
    </div>
  </section>

  <!-- RAID group wizard -->
  <section class="absolute left-[345px] top-[207px] w-[1050px] h-[780px] bg-white border-t-4 border-[#2b5890] shadow-[0_5px_18px_rgba(0,0,0,.7)] flex flex-col">
    <div class="h-[50px] shrink-0 bg-linear-to-b from-[#dee6f0] to-white flex items-center pr-[27px]">
      <div class="flex-1 pl-[46px] pt-[2px] text-center font-bold text-[19.500px] tracking-[0.200px] text-[#29568f]">RAID Group 创建向导</div>
      <svg width="18" height="18" viewBox="0 0 18 18" stroke="#8e969e" stroke-width="2"><path d="M1 1l16 16M17 1L1 17"/></svg>
    </div>
    <div class="relative h-[168px] shrink-0 bg-[#2d6bb1] text-white">
      <svg class="absolute inset-0" width="1050" height="168">
        <defs>
          <linearGradient id="ga" x1="0" y1="0" x2=".3" y2="1"><stop offset="0" stop-color="#2b65aa"/><stop offset=".5" stop-color="#2768ae"/><stop offset="1" stop-color="#2b7bbe"/></linearGradient>
          <linearGradient id="gb" x1=".5" y1="0" x2=".4" y2="1"><stop offset="0" stop-color="#2a66a9"/><stop offset=".55" stop-color="#226bb2"/><stop offset="1" stop-color="#2089d0"/></linearGradient>
          <linearGradient id="ge" x1="0" y1="0" x2="0" y2="1"><stop offset="0" stop-color="#0e3a7c"/><stop offset="1" stop-color="#205a9b"/></linearGradient>
          <linearGradient id="gd" x1="1" y1="0" x2="0" y2="1"><stop offset="0" stop-color="#1a5498"/><stop offset="1" stop-color="#2472b8"/></linearGradient>
          <linearGradient id="gs" x1="0" y1="0" x2="1" y2="0"><stop offset="0" stop-color="#2d6bb1"/><stop offset="1" stop-color="#2a63a6"/></linearGradient>
        </defs>
        <path d="M480 0h49l87 168h-60z" fill="url(#gs)"/>
        <path d="M529 0h127l112 121-97 47h-55z" fill="url(#ga)"/>
        <path d="M656 0h143l151 36-182 85z" fill="url(#gb)"/>
        <path d="M799 0h142l9 36z" fill="#417bb4"/>
        <path d="M941 0h84l-75 36z" fill="#1b66b0"/>
        <path d="M768 121l-97 47h148z" fill="#245597"/>
        <path d="M950 36L768 121l51 47z" fill="url(#gd)"/>
        <path d="M950 36L819 168h167z" fill="url(#ge)"/>
        <path d="M950 36l36 132h6l58-35z" fill="#205ea3"/>
        <path d="M950 36l75-36h25v133z" fill="#18549b"/>
        <path d="M992 168l58-35v35z" fill="#1b5296"/>
      </svg>
      <div class="relative pl-[30px] pt-[54px]">
        <h2 class="text-[27px] leading-[38px] font-bold">选择硬盘</h2>
        <p class="text-[21px] leading-[26px]">请从左向右拖动可用的硬盘。</p>
      </div>
    </div>
    <div class="h-[492px] flex pt-[12px]">
      <div class="w-[506px] h-[468px] border-r border-[#c3cbd9] pl-[134px] pt-[182px]">
        <div class="w-[270px] h-[105px] rounded-lg border border-[#bcc5d1] shadow-[0_1px_5px_rgba(0,0,0,.2)] flex items-center pl-[30px] text-[19.500px]">
          <svg width="73" height="66" viewBox="0 0 73 66"><path d="M36.500 1C57 1 72 13 72 30c0 11-6 20-16 25 0 5 2 7 4 9-7 1-14-2-17-6C20 60 1 48 1 30 1 13 16 1 36.500 1z" fill="url(#bub)"/><text x="36" y="45" text-anchor="middle" font-family="DejaVu Serif" font-size="40" font-style="italic" font-weight="700" fill="#fff">i</text></svg>
          <span class="ml-[17px] pt-[2px]">无可用硬盘。</span>
        </div>
      </div>
      <div class="pl-[15px] pt-[11px]">
        <h3 class="font-bold leading-[22px] tracking-[0.300px]">RAID Group</h3>
        <div class="mt-[9px] ml-[27px] w-[438px] flex flex-col gap-[6px]">
          <div class="h-[42px] border border-dashed border-[#b9c8d8] bg-[#f5faff] flex items-center pl-3 pr-[13px] text-[#1ba00a]"><svg width="22" height="24"><use href="#drive"/></svg><span class="ml-[12px] tracking-[0.470px]">3 - SATA / HDD 465.76 GB</span><svg class="ml-auto" width="24" height="24"><use href="#remove"/></svg></div>
          <div class="h-[42px] border border-dashed border-[#b9c8d8] bg-[#f5faff] flex items-center pl-3 pr-[13px] text-[#1ba00a]"><svg width="22" height="24"><use href="#drive"/></svg><span class="ml-[12px] tracking-[0.470px]">4 - SATA / HDD 465.76 GB</span><svg class="ml-auto" width="24" height="24"><use href="#remove"/></svg></div>
          <div class="h-[42px] border border-dashed border-[#b9c8d8] bg-[#f5faff] flex items-center px-3 text-[#98a1ab]">其它 HDD</div>
          <div class="h-[42px] border border-dashed border-[#b9c8d8] bg-[#f5faff] flex items-center px-3 text-[#98a1ab]">其它 HDD</div>
        </div>
      </div>
    </div>
    <div class="-mt-[4px] mx-[30px] h-[4px] shrink-0 bg-linear-to-b from-[#f2f3f4] to-[#d5d7d9]"></div>
    <div class="mt-[12px] h-[42px] flex pl-[45px] pr-[45px] gap-[15px]">
      <button class="w-[123px] rounded-[4px] border border-[#c5d1df] bg-linear-to-b from-[#f6fafe] to-[#e9eef3] pt-px">上一步</button>
      <button class="ml-auto w-[123px] rounded-[4px] border border-[#1e5aa5] bg-linear-to-b from-[#3b7dcb] to-[#2565b3] text-white pt-px">下一步</button>
      <button class="w-[123px] rounded-[4px] border border-[#c5d1df] bg-linear-to-b from-[#f6fafe] to-[#e9eef3] pt-px">取消</button>
    </div>
  </section>

  <!-- widget panel -->
  <aside class="absolute left-[2039px] top-[71px] w-[510px] h-[1320px] rounded-t-md bg-[#2e425b]/95 shadow-[0_0_10px_rgba(0,10,40,.5)] px-[15px] flex flex-col gap-3">
    <div class="h-[36px] shrink-0 flex items-center pt-3 pl-[12px] pr-[10px]">
      <svg width="18" height="18" stroke="#dbe4ed" stroke-width="3"><path d="M9 0v18M0 9h18"/></svg>
      <svg class="ml-auto" width="18" height="18" stroke="#dbe4ed" stroke-width="3"><path d="M0 9h18"/></svg>
      <svg class="ml-[27px]" width="23" height="23" viewBox="0 0 23 23" fill="#cfdae5"><path d="M14 0l8 8-3 2-1-.5-3.500 4c1 3 0 5-1.500 6L8 14.500 1 22l-.5-.5L7 13 3 8.500c1.500-1.500 4-2 6-1.500L13 3.500l-1-1z"/></svg>
      <svg class="ml-[26px]" width="22" height="22" fill="#429bf8"><path d="M0 3h15.500v6H0zM6 12h9.500v6H6zM18.500 0H22v22h-3.500z"/></svg>
    </div>

    <div class="h-[312px] shrink-0 bg-[#e9eef6] border border-[#b7c3d2]">
      <div class="h-[53px] flex items-center pl-[15px]">
        <svg width="31" height="34" viewBox="0 0 31 34"><path d="M15.500 0c5 3 10 4 15 4v13c0 9-8 14-15 17C8 31 .5 26 .5 17V4c5 0 10-1 15-4z" fill="#0887ea"/><text x="15.500" y="26" text-anchor="middle" font-family="DejaVu Serif" font-size="25" font-style="italic" font-weight="700" fill="#fff">i</text></svg>
        <span class="ml-[10px] pt-[2px] font-bold text-[19.500px]">系统状况</span>
      </div>
      <div class="h-[119px] flex pl-[30px] pt-[9px]">
        <svg width="96" height="96" viewBox="0 0 96 96"><circle cx="48" cy="48" r="48" fill="#1fb400"/><path d="M22.500 48.500L39.500 66l34-35" fill="none" stroke="#fff" stroke-width="11.500"/></svg>
        <div class="ml-[23px]"><div class="mt-[10px] text-[29.500px] leading-[44px] text-[#1ea30a]">良好</div><div class="mt-[10px] leading-[26px] text-[#3d4650] tracking-[0.080px]">您的 DiskStation 运转正常。</div></div>
      </div>
      <dl class="grid grid-cols-[222px_1fr] auto-rows-[42px] items-center pl-[18px]">
        <dt class="font-bold">系统名称</dt><dd class="tracking-[0.100px]">MyNAS610_office</dd>
        <dt class="font-bold flex items-center">局域网 1<svg class="ml-[10px] mt-1" width="10" height="6"><path d="M0 0h10L5 5.500z" fill="#505a64"/></svg></dt><dd class="tracking-[0.250px]">192.168.0.102</dd>
        <dt class="font-bold">运行时间</dt><dd class="tracking-[0.500px]">00:04:09</dd>
      </dl>
    </div>

    <div class="h-[312px] shrink-0 bg-[#e9eef6] border border-[#b7c3d2]">
      <div class="h-[59px] flex items-center pl-[13px] pb-[6px]">
        <svg width="34" height="31" viewBox="0 0 34 31"><rect width="34" height="31" rx="1.500" fill="#0887ea"/><rect x="4" y="4" width="26" height="23" fill="none" stroke="#fff" stroke-width="1.500"/><path d="M4 16h5l3-4 2 6 3-10 3 15 3-9 2 3h5" fill="none" stroke="#fff" stroke-width="1.800"/></svg>
        <span class="ml-[9px] pt-[2px] font-bold text-[19.500px]">资源监控</span>
      </div>
      <div class="h-[36px] flex items-center pl-[18px]"><b class="w-[126px]">CPU</b><div class="w-[225px] h-6 rounded-[5px] bg-[#ccd6e1] overflow-hidden"><div class="h-full bg-linear-to-r from-[#03a5fd] to-[#2f7fe8]" style="width:6.2%"></div></div><span class="ml-[15px]">6%</span></div>
      <div class="h-[36px] flex items-center pl-[18px]"><b class="w-[126px]">RAM</b><div class="w-[225px] h-6 rounded-[5px] bg-[#ccd6e1] overflow-hidden"><div class="h-full bg-linear-to-r from-[#03a5fd] to-[#2f7fe8]" style="width:8%"></div></div><span class="ml-[15px]">8%</span></div>
      <div class="h-[44px] flex items-center pl-[21px]">
        <b class="w-[128px] flex items-center -mt-1">局域网 1<svg class="ml-[10px] mt-1" width="10" height="6"><path d="M0 0h10L5 5.500z" fill="#505a64"/></svg></b>
        <svg width="15" height="15"><path d="M7.500 0L15 8h-3.500v7h-8V8H0z" fill="#0887ea"/></svg><span class="ml-[4px] w-[88px] tracking-[0.400px] text-[#2b5795]">1 KB/s</span>
        <svg width="15" height="15"><path d="M7.500 15L0 7h3.500V0h8v7H15z" fill="#1fb400"/></svg><span class="ml-[5px] tracking-[0.400px] text-[#1ea30a]">1 KB/s</span>
      </div>
      <div class="flex">
        <div class="w-[134px] text-right leading-[20.200px]"><div>100</div><div>80</div><div>60</div><div>40</div><div>20</div><div>0</div></div>
        <svg class="ml-[16px] mt-[9px]" width="306" height="104" viewBox="0 0 306 104">
          <rect x="1" y="1" width="304" height="102" fill="#fff"/>
          <path d="M0 1h306M0 21.500h306M0 41h306M0 62h306M0 81.500h306M1 0v102M305 0v102M0 102.500h306" stroke="#dfe8f2" stroke-width="1.500"/>
          <path d="M1 75l7 16 9 10 10-4 10 3.500h268" fill="none" stroke="#1fb400" stroke-width="2.400"/>
          <path d="M1 77l7 24.500 12 .5 10-.5h275" fill="none" stroke="#0887ea" stroke-width="2.400"/>
        </svg>
      </div>
    </div>

    <div class="h-[312px] shrink-0 bg-[#e9eef6] border border-[#b7c3d2] flex flex-col">
      <div class="h-[53px] shrink-0 flex items-center pl-[13px]">
        <svg width="34" height="34" viewBox="0 0 34 34"><path d="M0 34c0-5 4-7 12-9h10c8 2 12 4 12 9z" fill="#07bdb8"/><path d="M12 25l5 6 5-6z" fill="#fff"/><path d="M9 7c0-4 16-4 16 0 1 6-1 11-4 15v4l-4 4-4-4v-4C10 18 8 13 9 7z" fill="#ffdcae"/><path d="M9 11C7 3 11 0 17 0s10 3 8 11c-1-3-1-4-2-5-3 1-9 1-12 0-1 1-1 3-2 5z" fill="#774b27"/></svg>
        <span class="ml-[9px] pt-[2px] font-bold text-[19.500px]">目前连接用户</span>
      </div>
      <div class="h-[42px] shrink-0 flex items-center pl-[21px]">
        <svg width="22" height="22" fill="#505a64"><use href="#person"/></svg>
        <span class="ml-[15px] w-[120px]">admin</span><span class="w-[108px]">HTTP/HTT...</span><span class="tracking-[0.500px]">00:03:08</span>
        <span class="ml-auto mr-[15px] w-[2px] h-[42px] bg-[#d2dae4]"></span>
        <svg width="22" height="22" viewBox="0 0 22 22"><circle cx="11" cy="11" r="10.500" fill="#ee5c5c" stroke="#d94e4e"/><path d="M5 11h12" stroke="#fff" stroke-width="3.500"/></svg>
        <svg class="ml-[13px] mr-[13px] text-[#bdc5cf]" width="18" height="12"><use href="#up"/></svg>
      </div>
      <svg class="mt-auto mb-[20px] ml-auto mr-[13px] text-[#bdc5cf]" width="18" height="12"><use href="#down"/></svg>
    </div>

    <div class="h-[312px] shrink-0 bg-[#f5f7fb] border border-[#b7c3d2] flex flex-col items-end">
      <div class="w-full h-[53px] shrink-0 bg-[#e9eef6] flex items-center pl-[13px]">
        <svg width="34" height="34" viewBox="0 0 34 34" fill="none" stroke-width="8"><circle cx="17" cy="17" r="13" stroke="#0887ea"/><path d="M5 22.500A13 13 0 0 1 12.500 4.800" stroke="#ffb300"/><path d="M12.500 4.800A13 13 0 0 1 22.500 5.200" stroke="#fb4747"/><path d="M13.500 9.500L11 0M21 9.500L25.500 0M9.500 20.500L0 25.500" stroke="#e9eef6" stroke-width="1.500"/></svg>
        <span class="ml-[9px] pt-[2px] font-bold text-[19.500px]">存储</span>
      </div>
      <svg class="mt-[8px] mr-[13px] text-[#dadfe5]" width="18" height="12"><use href="#up"/></svg>
      <div class="mt-[73px] self-center w-[182px] h-[60px] rounded-[4px] bg-white border border-[#c8d0da] shadow-[0_2px_4px_rgba(0,0,0,.28)] flex items-center justify-center pt-[2px] text-[24px]">无存储空间</div>
      <svg class="mt-[68px] mr-[13px] text-[#dadfe5]" width="18" height="12"><use href="#down"/></svg>
    </div>
  </aside>
</main>
</body>
</html>
